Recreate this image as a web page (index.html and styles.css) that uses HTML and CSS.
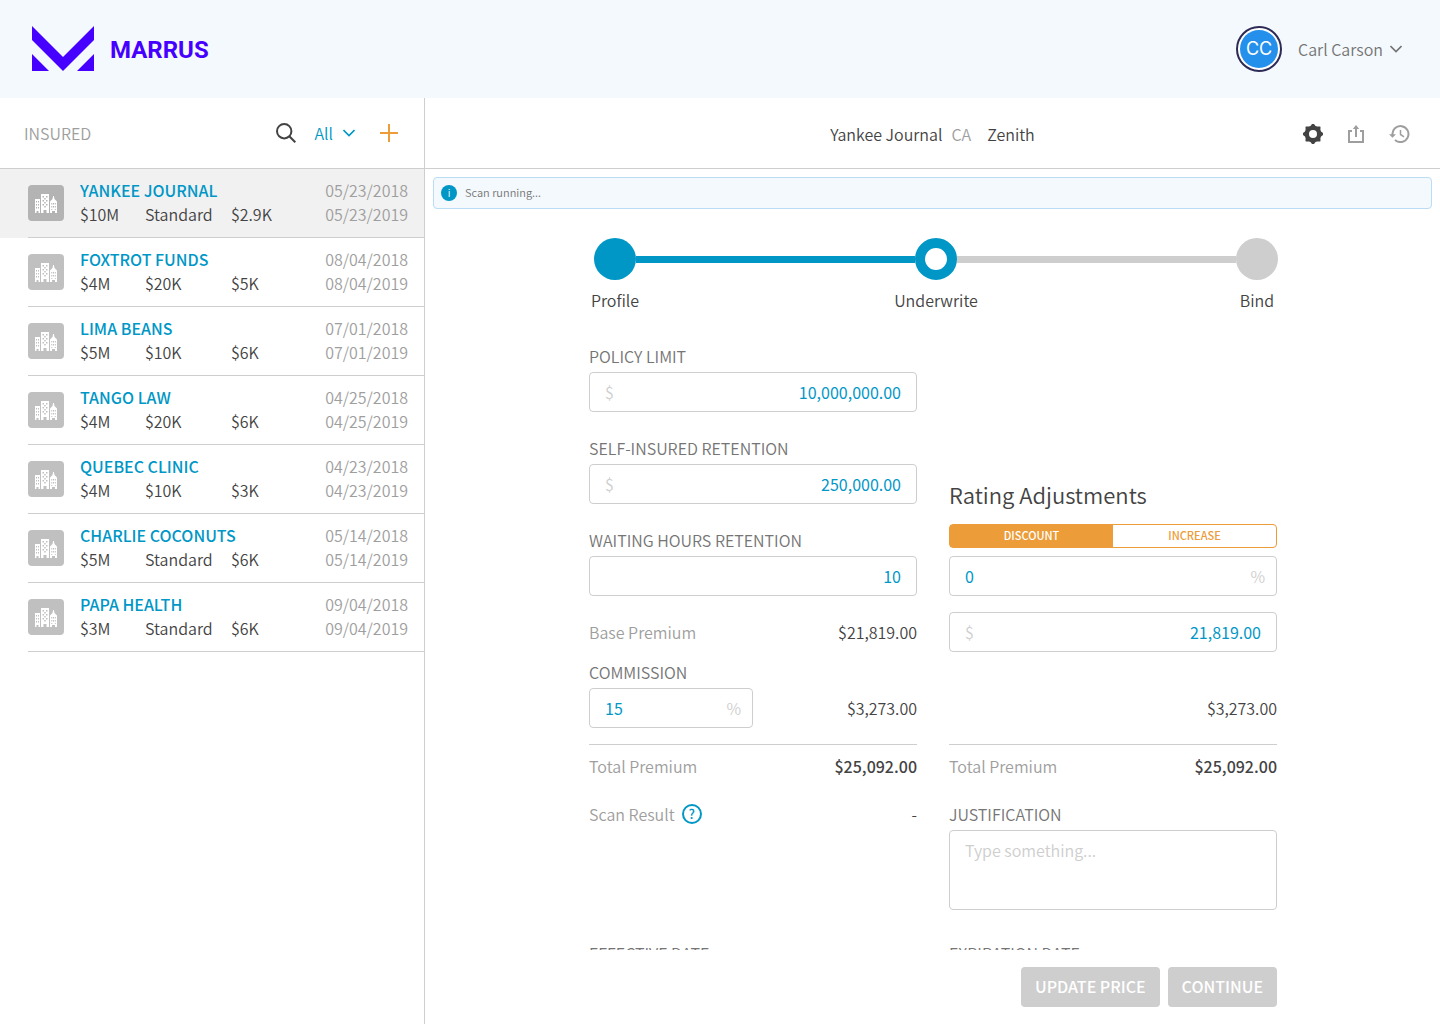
FILE: index.html
```html
<!DOCTYPE html>
<html lang="en">
<head>
<meta charset="utf-8">
<meta name="viewport" content="width=device-width, initial-scale=1">
<title>Marrus – Underwrite</title>
<link rel="stylesheet" href="styles.css">
</head>
<body>
<svg class="sprite" aria-hidden="true">
  <symbol id="building" viewBox="0 0 36 36">
    <path fill="#fff" d="M7 14h5v14h-1.500v-2h-2v2H7zM13 9h8v19h-2.500v-3h-3v3H13zM22 16.500l2.500-2.500.6-3h.8l.6 3 2.500 2.500V28h-2v-2h-3v2h-2z"/>
    <path d="M8 16h1v1.500H8zM10 16h1v1.500h-1zM8 19h1v1.500H8zM10 19h1v1.500h-1zM8 22h1v1.500H8zM10 22h1v1.500h-1zM14.500 11H16v1.500h-1.500zM18 11h1.500v1.500H18zM16.200 13h1.500v1.500h-1.500zM14.500 15H16v1.500h-1.500zM18 15h1.500v1.500H18zM16.200 17h1.500v1.500h-1.500zM14.500 19H16v1.500h-1.500zM18 19h1.500v1.500H18zM16.200 21h1.500v1.500h-1.500zM23.300 18h1v1.500h-1zM25 18h1v1.500h-1zM26.800 18h1v1.500h-1zM23.300 21h1v1.500h-1zM25 21h1v1.500h-1zM26.800 21h1v1.500h-1zM23.300 24h1v1h-1zM26.800 24h1v1h-1z"/>
  </symbol>
</svg>
<div class="app">
  <header class="masthead">
    <a class="brand" href="#">
      <svg width="62" height="45" viewBox="0 0 62 45" fill="#4600ff" aria-hidden="true"><path d="M0 0l31 31L62 0v14L31 45 0 14zM0 28l17 17H0zM62 28v17H45z"/></svg>
      <span>MARRUS</span>
    </a>
    <button class="account" type="button">
      <span class="avatar"><span>CC</span></span>
      <span>Carl Carson</span>
      <svg class="chevron" width="12" height="8" viewBox="0 0 12 8" aria-hidden="true"><path d="M.5 1L6 6.500 11.500 1"/></svg>
    </button>
  </header>

  <div class="workspace">
    <aside class="sidebar">
      <div class="sidebar-head">
        <h2>INSURED</h2>
        <button class="icon-button" type="button" aria-label="Search"><svg width="20" height="20" viewBox="0 0 20 20" fill="none" stroke="#434343" stroke-width="2" aria-hidden="true"><circle cx="8.200" cy="8.200" r="7.200"/><path d="M13.300 13.300l6 6"/></svg></button>
        <button class="filter" type="button"><span>All</span><svg class="chevron" width="12" height="8" viewBox="0 0 12 8" aria-hidden="true"><path d="M.5 1L6 6.500 11.500 1"/></svg></button>
        <button class="icon-button" type="button" aria-label="Add insured"><svg width="18" height="18" viewBox="0 0 18 18" stroke="#ec9c38" stroke-width="2" aria-hidden="true"><path d="M9 0v18M0 9h18"/></svg></button>
      </div>
      <ul class="insured-list">
        <li class="selected"><a href="#"><svg class="tile" aria-hidden="true"><use href="#building"/></svg><span class="info"><strong>YANKEE JOURNAL</strong><span class="terms"><span>$10M</span><span>Standard</span><span>$2.9K</span></span></span><span class="dates">05/23/2018<br>05/23/2019</span></a></li>
        <li><a href="#"><svg class="tile" aria-hidden="true"><use href="#building"/></svg><span class="info"><strong>FOXTROT FUNDS</strong><span class="terms"><span>$4M</span><span>$20K</span><span>$5K</span></span></span><span class="dates">08/04/2018<br>08/04/2019</span></a></li>
        <li><a href="#"><svg class="tile" aria-hidden="true"><use href="#building"/></svg><span class="info"><strong>LIMA BEANS</strong><span class="terms"><span>$5M</span><span>$10K</span><span>$6K</span></span></span><span class="dates">07/01/2018<br>07/01/2019</span></a></li>
        <li><a href="#"><svg class="tile" aria-hidden="true"><use href="#building"/></svg><span class="info"><strong>TANGO LAW</strong><span class="terms"><span>$4M</span><span>$20K</span><span>$6K</span></span></span><span class="dates">04/25/2018<br>04/25/2019</span></a></li>
        <li><a href="#"><svg class="tile" aria-hidden="true"><use href="#building"/></svg><span class="info"><strong>QUEBEC CLINIC</strong><span class="terms"><span>$4M</span><span>$10K</span><span>$3K</span></span></span><span class="dates">04/23/2018<br>04/23/2019</span></a></li>
        <li><a href="#"><svg class="tile" aria-hidden="true"><use href="#building"/></svg><span class="info"><strong>CHARLIE COCONUTS</strong><span class="terms"><span>$5M</span><span>Standard</span><span>$6K</span></span></span><span class="dates">05/14/2018<br>05/14/2019</span></a></li>
        <li><a href="#"><svg class="tile" aria-hidden="true"><use href="#building"/></svg><span class="info"><strong>PAPA HEALTH</strong><span class="terms"><span>$3M</span><span>Standard</span><span>$6K</span></span></span><span class="dates">09/04/2018<br>09/04/2019</span></a></li>
      </ul>
    </aside>

    <main class="detail">
      <div class="detail-head">
        <h1><span>Yankee Journal</span><span class="state">CA</span><span class="carrier">Zenith</span></h1>
        <div class="actions">
          <button class="icon-button" type="button" aria-label="Settings"><svg width="20" height="20" viewBox="0 0 20 20" aria-hidden="true"><path fill="#434343" fill-rule="evenodd" d="M9 0h2l1.500 2 1.700.6 2.900-.1.400.4-.1 2.900.6 1.700 2 1.500v2l-2 1.500-.6 1.700.1 2.900-.4.400-2.900-.1-1.700.6L11 20H9l-1.500-2-1.700-.6-2.900.1-.4-.4.1-2.900L2 12.500 0 11V9l2-1.500.6-1.700-.1-2.900.4-.4 2.900.1L7.500 2zM10 6a4 4 0 100 8 4 4 0 000-8z"/></svg></button>
          <button class="icon-button" type="button" aria-label="Share"><svg width="16" height="18" viewBox="0 0 16 18" fill="none" stroke="#9e9e9e" stroke-width="2" aria-hidden="true"><path d="M4 6H1v11h14V6h-3M8 12V2"/><path d="M8 0L4.800 4h6.400z" fill="#9e9e9e" stroke="none"/></svg></button>
          <button class="icon-button" type="button" aria-label="History"><svg width="21" height="18" viewBox="0 0 21 18" fill="none" stroke="#9e9e9e" stroke-width="2" aria-hidden="true"><path d="M3.500 10A8 8 0 1 1 6 14.900"/><path d="M11.500 5v4.500l3.500 2.300" stroke-width="1.500"/><path d="M0 9.300h7l-3.500 3.500z" fill="#9e9e9e" stroke="none"/></svg></button>
        </div>
      </div>

      <div class="notice" role="status"><span class="notice-icon">i</span><span class="notice-text">Scan running...</span></div>

      <div class="scroller">
        <div class="column">
          <ol class="stepper">
            <li class="step done"><span class="dot"></span><span>Profile</span></li>
            <li class="line done" aria-hidden="true"></li>
            <li class="step current"><span class="dot"></span><span>Underwrite</span></li>
            <li class="line" aria-hidden="true"></li>
            <li class="step"><span class="dot"></span><span>Bind</span></li>
          </ol>

          <form class="quote" id="quote">
            <div class="fields">
              <div class="field"><label for="limit">POLICY LIMIT</label><div class="box"><span class="unit">$</span><input class="number" id="limit" type="text" value="10,000,000.00"></div></div>
              <div class="field"><label for="retention">SELF-INSURED RETENTION</label><div class="box"><span class="unit">$</span><input class="number" id="retention" type="text" value="250,000.00"></div></div>
              <div class="field"><label for="hours">WAITING HOURS RETENTION</label><div class="box"><input class="number" id="hours" type="text" value="10"></div></div>
            </div>
            <div class="rating">
              <h2>Rating Adjustments</h2>
              <div class="toggle"><button class="active" type="button">DISCOUNT</button><button type="button">INCREASE</button></div>
              <div class="box"><input type="text" value="0" aria-label="Adjustment percent"><span class="unit">%</span></div>
            </div>

            <div class="pair premium"><span class="muted">Base Premium</span><span>$21,819.00</span></div>
            <div class="box premium"><span class="unit">$</span><input class="number" type="text" value="21,819.00" aria-label="Adjusted premium"></div>

            <div class="pair commission"><div class="field"><label for="commission">COMMISSION</label><div class="box"><input id="commission" type="text" value="15"><span class="unit">%</span></div></div><span class="amount">$3,273.00</span></div>
            <div class="pair commission"><span class="amount">$3,273.00</span></div>

            <div class="pair total"><span class="muted">Total Premium</span><strong>$25,092.00</strong></div>
            <div class="pair total"><span class="muted">Total Premium</span><strong>$25,092.00</strong></div>

            <div class="pair scan"><span class="muted">Scan Result</span><button class="help" type="button" aria-label="About scan results">?</button><span class="amount">-</span></div>
            <div class="field justification"><label for="why">JUSTIFICATION</label><textarea id="why" placeholder="Type something..."></textarea></div>

            <div class="field dates-field"><label for="effective">EFFECTIVE DATE</label><div class="box"><input id="effective" type="text"></div></div>
            <div class="field dates-field"><label for="expiration">EXPIRATION DATE</label><div class="box"><input id="expiration" type="text"></div></div>
          </form>
        </div>
      </div>

      <footer class="column submit">
        <button type="submit" form="quote">UPDATE PRICE</button>
        <button type="submit" form="quote">CONTINUE</button>
      </footer>
    </main>
  </div>
</div>
</body>
</html>
```
FILE: styles.css
```css
* { box-sizing: border-box; }

body {
  margin: 0;
  background: #fff;
  color: #434343;
  font-family: "Noto Sans CJK SC", "Noto Sans", sans-serif;
  font-size: 16px;
  font-weight: 350;
  line-height: 24px;
}

button, input, textarea { font: inherit; color: inherit; }
button { padding: 0; border: 0; background: none; cursor: pointer; }
h1, h2 { margin: 0; font-size: 16px; font-weight: 350; }
ul, ol { margin: 0; padding: 0; list-style: none; }
a { color: inherit; text-decoration: none; }
svg { display: block; }
.sprite { position: absolute; width: 0; height: 0; }
.chevron { fill: none; stroke: currentColor; stroke-width: 1.6; }

.app { display: flex; flex-direction: column; height: 100vh; }

/* Masthead */
.masthead {
  display: flex;
  flex: none;
  align-items: center;
  justify-content: space-between;
  height: 98px;
  padding: 0 38px 0 32px;
  background: #f4f9fd;
}
.brand {
  display: flex;
  align-items: center;
  gap: 16px;
  padding-bottom: 2px;
  color: #4600ff;
  font: bold 24px/32px Roboto, sans-serif;
}
.brand span { padding-top: 4px; }
.account { display: flex; align-items: center; color: #757575; }
.account .chevron { margin-left: 7px; }
.avatar {
  width: 46px;
  height: 46px;
  margin-right: 16px;
  padding: 2px;
  border: 2px solid #2d2a55;
  border-radius: 50%;
  background: #fff;
}
.avatar span {
  display: block;
  border-radius: 50%;
  background: #2490eb;
  color: #fff;
  font: 18px/38px Inter, sans-serif;
}

/* Insured list */
.workspace { display: flex; flex: 1; min-height: 0; }
.sidebar { flex: none; width: 425px; border-right: 1px solid #cecece; overflow: auto; }
.sidebar-head {
  display: flex;
  align-items: center;
  height: 71px;
  padding: 0 26px 0 24px;
  border-bottom: 1px solid #cecece;
}
.sidebar-head h2 { flex: 1; color: #9e9e9e; }
.filter { display: flex; align-items: center; gap: 10px; margin: 0 25px 0 18px; color: #0097c7; }
.insured-list a {
  display: flex;
  align-items: center;
  height: 69px;
  margin-left: 28px;
  padding-right: 16px;
  border-bottom: 1px solid #cecece;
}
.selected { background: #f1f1f1; }
.tile { width: 36px; height: 36px; margin-right: 16px; border-radius: 4px; background: #c0c0c0; fill: #c0c0c0; }
.selected .tile { background: #b3b3b3; fill: #b3b3b3; }
.info { flex: 1; }
.info, .dates { padding-bottom: 2px; }
.info strong { color: #0097c7; font-weight: 500; }
.terms { display: grid; grid-template-columns: 65px 86px 1fr; }
.dates { color: #9e9e9e; text-align: right; }

/* Detail */
.detail { display: flex; flex: 1; flex-direction: column; min-width: 0; }
.detail-head {
  display: grid;
  flex: none;
  grid-template-columns: 1fr auto 1fr;
  align-items: center;
  height: 71px;
  padding: 2px 30px 0;
  border-bottom: 1px solid #cecece;
}
.detail-head h1 { display: flex; grid-column: 2; }
.state { margin: 0 16px 0 9px; color: #9e9e9e; }
.actions { display: flex; align-items: center; justify-content: flex-end; gap: 25px; }
.notice {
  display: flex;
  flex: none;
  align-items: center;
  gap: 8px;
  height: 32px;
  margin: 8px 8px 0;
  padding: 0 7px;
  border: 1px solid #bbdcf5;
  border-radius: 4px;
  background: #f4f9fd;
  color: #757575;
  font-size: 11px;
  line-height: 16px;
}
.notice-icon {
  width: 16px;
  border-radius: 50%;
  background: #0097c7;
  color: #fff;
  font-size: 10px;
  text-align: center;
}
.notice-text { padding-bottom: 2px; }
.scroller { flex: 1; min-height: 0; overflow: auto; scrollbar-width: none; }
.column { width: 100%; max-width: 689px; margin: 0 auto; padding-left: 1px; }

.stepper { display: flex; margin-right: -1px; padding: 29px 0 0 5px; }
.step { display: flex; flex-direction: column; align-items: center; gap: 8px; width: 42px; }
.dot { width: 42px; height: 42px; border-radius: 50%; background: #cecece; }
.done .dot { background: #0097c7; }
.current .dot { border: 10px solid #0097c7; background: #fff; }
.line { flex: 1; height: 7px; margin-top: 18px; background: #cecece; }
.line.done { background: #0097c7; }

/* Quote form */
.quote { display: grid; grid-template-columns: 1fr 1fr; column-gap: 32px; padding: 32px 0 24px; }
.fields { display: grid; gap: 24px; }
.field label { display: block; margin-bottom: 4px; color: #757575; }
.box {
  display: flex;
  align-items: center;
  height: 40px;
  padding: 0 15px;
  border: 1px solid #cecece;
  border-radius: 4px;
}
.box input { flex: 1; width: 100%; min-width: 0; padding: 0; border: 0; outline: 0; background: none; color: #0097c7; font-weight: 400; }
.box .number { text-align: right; }
.unit { color: #cecece; }
input + .unit { margin-right: -4px; }
.rating { align-self: end; }
.rating h2 { margin-bottom: 14px; font-size: 22px; line-height: 32px; }
.toggle { display: grid; grid-template-columns: 1fr 1fr; height: 24px; margin-bottom: 8px; border: 1px solid #ec9c38; border-radius: 4px; }
.toggle button { padding-bottom: 2px; color: #ec9c38; font-size: 11px; font-weight: 500; line-height: 20px; }
.toggle .active { background: #ec9c38; color: #fff; }
.muted { color: #9e9e9e; }
.pair { display: flex; align-items: center; justify-content: space-between; }
.premium { height: 40px; margin-top: 16px; }
.commission { align-items: flex-end; margin-top: 8px; }
.commission .field { width: 50%; }
.amount { margin-left: auto; }
.commission .amount { line-height: 40px; }
.total { margin-top: 16px; padding: 9px 0 12px; border-top: 1px solid #cecece; }
.total strong { font-weight: 500; }
.scan, .justification { margin-top: 12px; }
.scan { align-items: flex-start; }
.help {
  width: 20px;
  height: 20px;
  margin: 2px 0 0 7px;
  border: 2px solid #0097c7;
  border-radius: 50%;
  color: #0097c7;
  font-size: 13px;
  font-weight: 500;
  line-height: 16px;
}
textarea {
  display: block;
  width: 100%;
  height: 80px;
  padding: 7px 15px;
  border: 1px solid #cecece;
  border-radius: 4px;
  resize: none;
}
textarea::placeholder { color: #cecece; }
.dates-field { margin-top: 31px; }

.submit { display: flex; flex: none; justify-content: flex-end; gap: 8px; padding: 17px 0; }
.submit button {
  height: 40px;
  padding: 0 14px 2px;
  border-radius: 4px;
  background: #cecece;
  color: #fff;
  font-weight: 500;
}
```
